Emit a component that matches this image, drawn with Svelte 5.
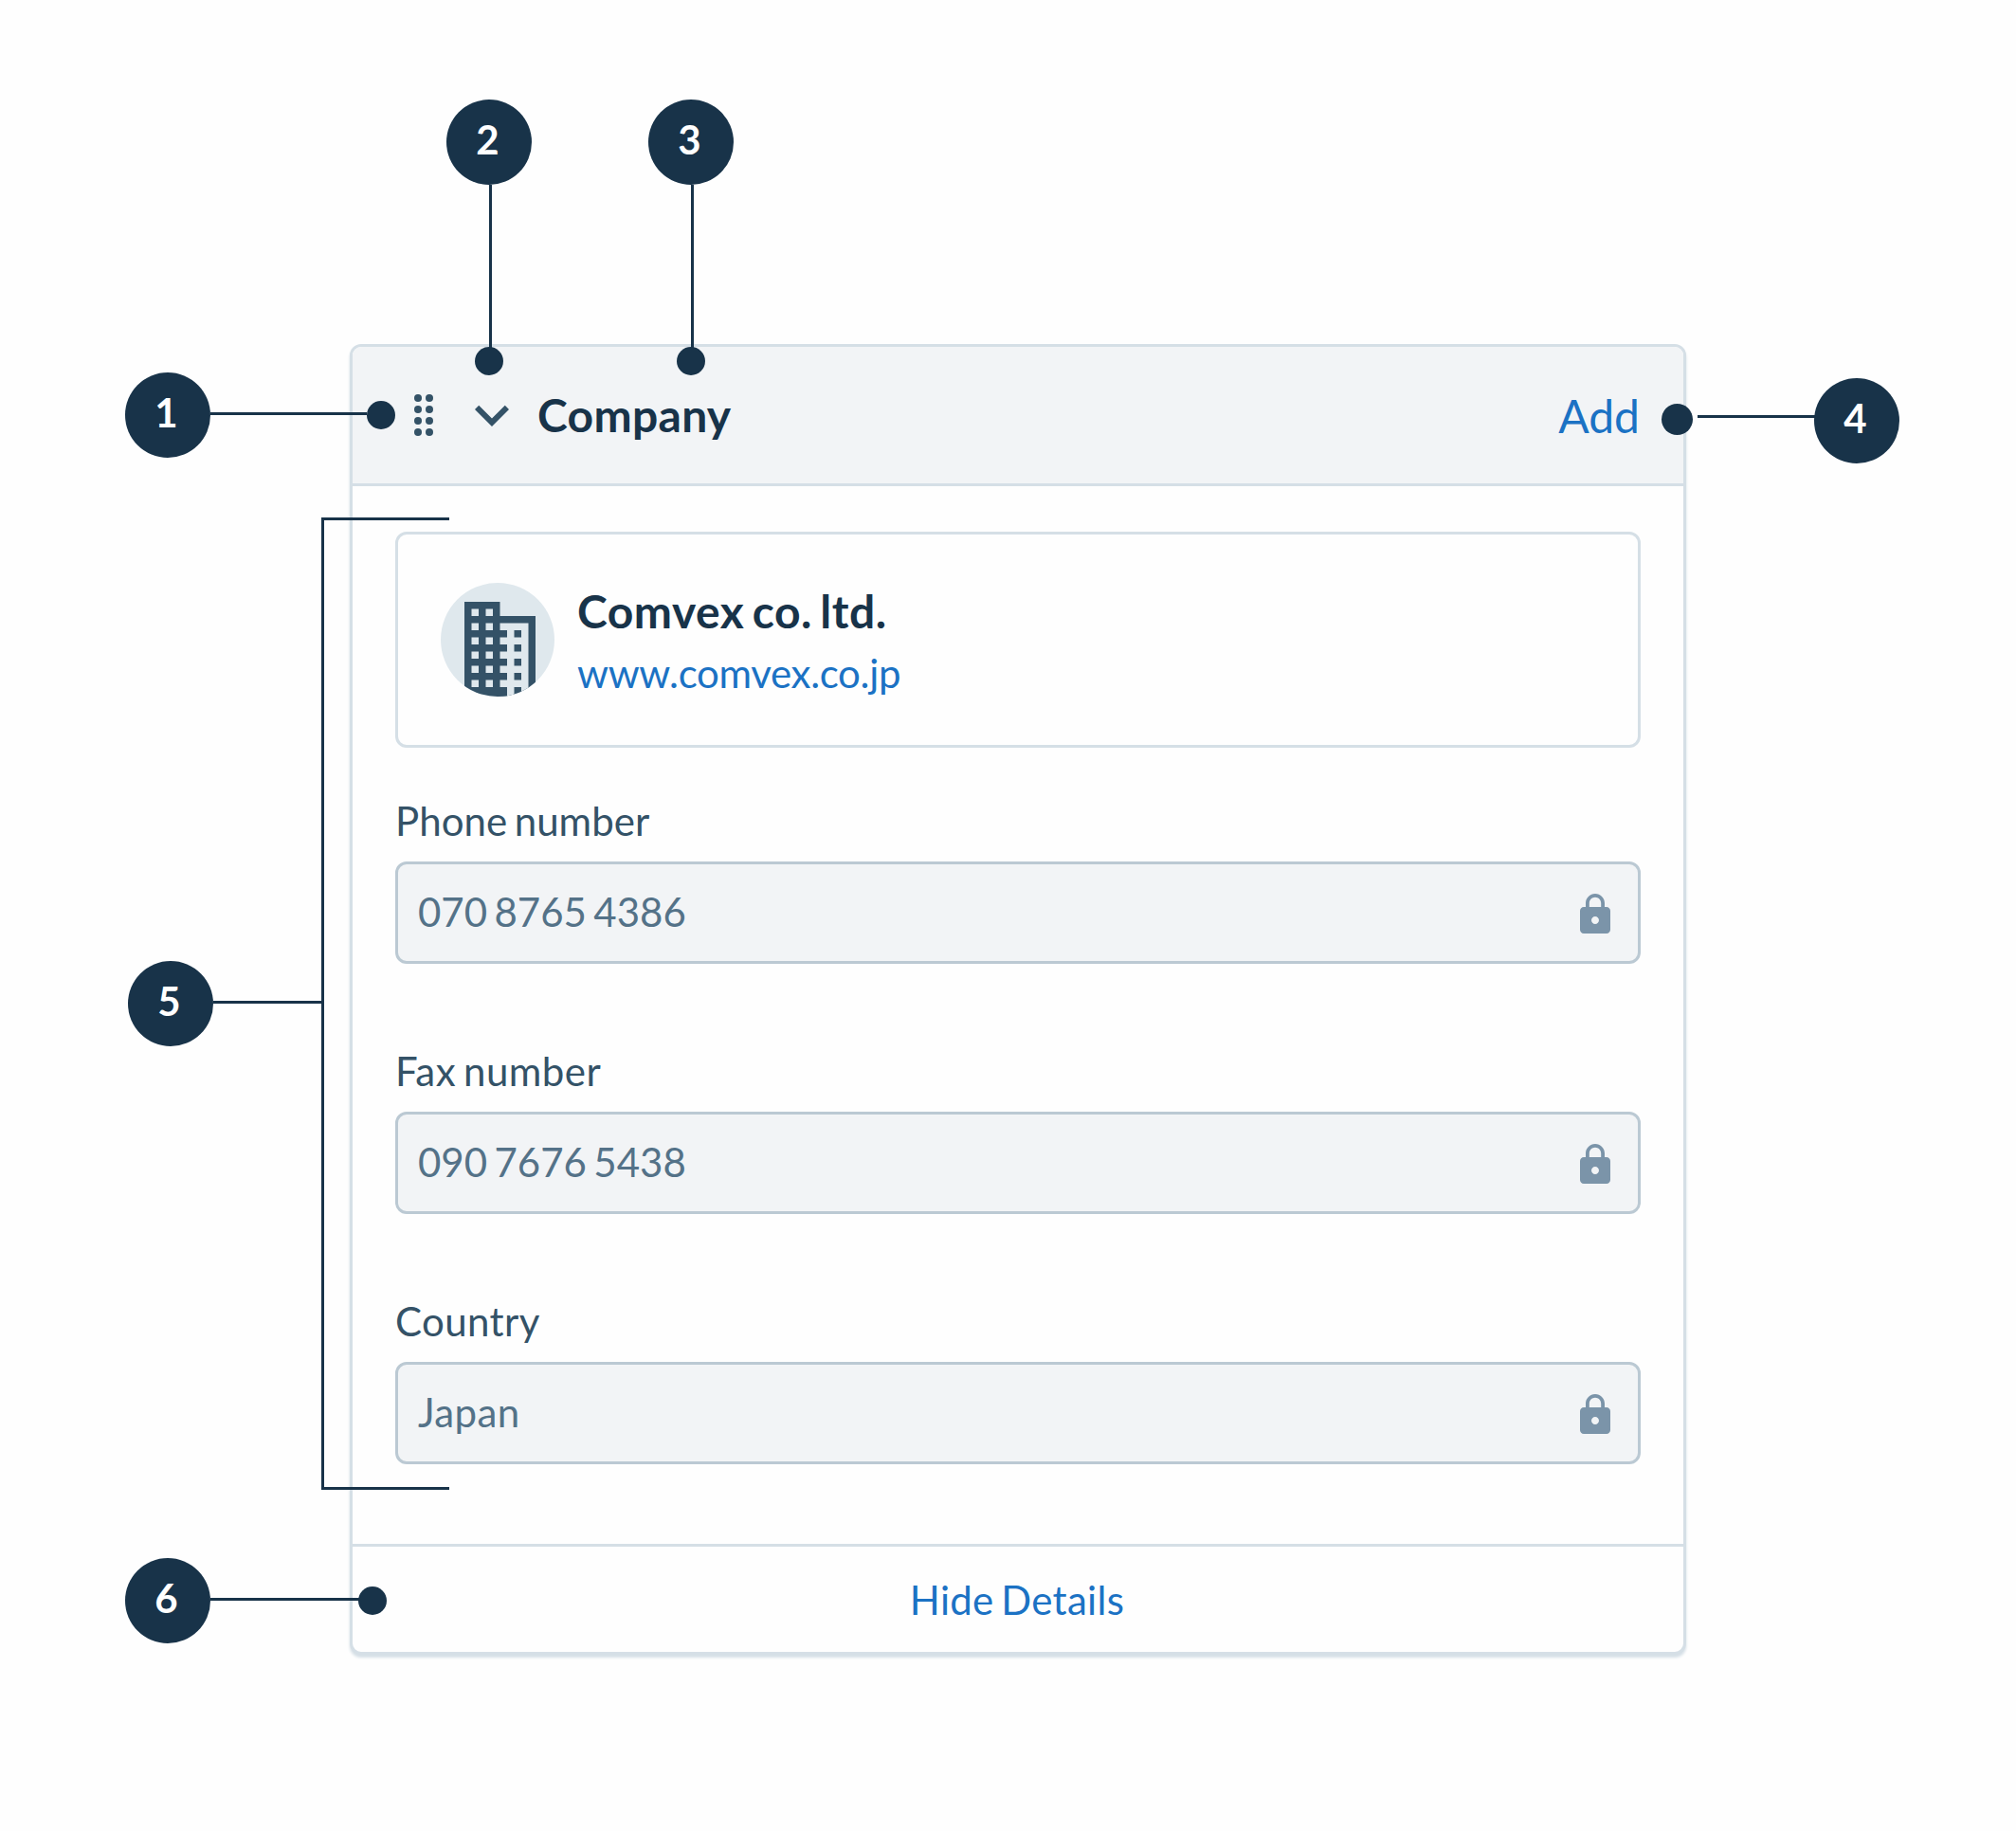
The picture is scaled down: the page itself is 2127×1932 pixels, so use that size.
<script>
  const fields = [
    { label: 'Phone number', tracking: 0.05, value: '070 8765 4386', valueTracking: 0 },
    { label: 'Fax number', tracking: 0.5, value: '090 7676 5438', valueTracking: 0 },
    { label: 'Country', tracking: 0.38, value: 'Japan', valueTracking: 0.4 }
  ];

  const handleDots = [0, 1, 2, 3].flatMap((row) => [
    { x: 4, y: 4 + row * 12 },
    { x: 16, y: 4 + row * 12 }
  ]);

  const towerWindows = [0, 1, 2, 3, 4, 5].flatMap((row) => [
    { x: 32.5, y: 27.5 + row * 15 },
    { x: 47.5, y: 27.5 + row * 15 }
  ]);
  const annexRows = [50, 65, 80, 95, 110];

  // Callouts sit on a free canvas over the card: badge, leader line and end dot.
  const callouts = [
    { n: 1, x: 132, y: 393, line: [222, 435, 165, 3], dot: [387, 423, 30] },
    { n: 2, x: 471, y: 105, line: [516, 195, 3, 172], dot: [501, 366, 30] },
    { n: 3, x: 684, y: 105, line: [729, 195, 3, 172], dot: [714, 366, 30] },
    { n: 4, x: 1914, y: 399, line: [1791, 438, 124, 3], dot: [1752.5, 426, 33] },
    { n: 5, x: 135, y: 1014, line: [225, 1056, 115, 3], dot: null },
    { n: 6, x: 132, y: 1644, line: [222, 1686, 157, 3], dot: [378, 1674, 30] }
  ];
</script>

<main class="page">
  <section class="card">
    <header class="header">
      <svg class="handle" viewBox="0 0 20 44">
        {#each handleDots as d}
          <circle cx={d.x} cy={d.y} r="4" />
        {/each}
      </svg>
      <svg class="chevron" viewBox="0 0 24 24">
        <path d="M16.59 8.59 12 13.17 7.41 8.59 6 10l6 6 6-6z" />
      </svg>
      <h1 class="title">Company</h1>
      <span class="add">Add</span>
    </header>

    <div class="content">
      <article class="company">
        <svg class="avatar" viewBox="0 0 120 120">
          <defs>
            <clipPath id="avatar-clip"><circle cx="60" cy="60" r="60" /></clipPath>
          </defs>
          <g clip-path="url(#avatar-clip)">
            <rect class="pale" width="120" height="120" />
            <path class="ink" d="M25 20H62.5V35H100V120H25Z" />
            <rect class="pale" x="62.5" y="42.5" width="30" height="78" />
            {#each towerWindows as w}
              <rect class="pale" x={w.x} y={w.y} width="7.5" height="7.5" />
            {/each}
            {#each annexRows as y}
              <rect class="ink" x="62" {y} width="8" height={y === 110 ? 10 : 7.5} />
              <rect class="ink" x="77.5" {y} width="7.5" height="7.5" />
            {/each}
          </g>
        </svg>
        <div class="identity">
          <h2 class="name">Comvex co. ltd.</h2>
          <span class="site">www.comvex.co.jp</span>
        </div>
      </article>

      <div class="fields">
        {#each fields as f}
          <div class="field">
            <span class="label" style="letter-spacing:{f.tracking}px">{f.label}</span>
            <div class="input">
              <span class="value" style="letter-spacing:{f.valueTracking}px">{f.value}</span>
              <svg class="lock" viewBox="0 0 24 24">
                <path
                  d="M18 8h-1V6c0-2.76-2.24-5-5-5S7 3.240 7 6v2H6c-1.100 0-2 .9-2 2v10c0 1.100.9 2 2 2h12c1.100 0 2-.9 2-2V10c0-1.100-.9-2-2-2zm-6 9c-1.100 0-2-.9-2-2s.9-2 2-2 2 .9 2 2-.9 2-2 2zm3.100-9H8.900V6c0-1.710 1.390-3.100 3.100-3.100s3.100 1.390 3.100 3.100v2z"
                />
              </svg>
            </div>
          </div>
        {/each}
      </div>
    </div>

    <footer class="footer">Hide Details</footer>
  </section>

  <div class="bracket"></div>
  {#each callouts as c}
    <div
      class="line"
      style="left:{c.line[0]}px;top:{c.line[1]}px;width:{c.line[2]}px;height:{c.line[3]}px"
    ></div>
    {#if c.dot}
      <div class="dot" style="left:{c.dot[0]}px;top:{c.dot[1]}px;width:{c.dot[2]}px;height:{c.dot[2]}px"></div>
    {/if}
    <div class="badge" style="left:{c.x}px;top:{c.y}px">{c.n}</div>
  {/each}
</main>

<style>
  :global(body) {
    background: #fefefe;
  }

  .page {
    position: relative;
    box-sizing: border-box;
    width: 2127px;
    height: 1932px;
    padding: 363px 348px 186px 369px;
    overflow: hidden;
    font-family: Lato, sans-serif;
    font-size: 42px;
    line-height: 63px;
    word-spacing: -0.08em;
    color: #183349;
  }

  .card {
    display: flex;
    flex-direction: column;
    box-sizing: border-box;
    height: 1383px;
    border: 3px solid #d5dfe6;
    border-radius: 12px;
    background: #fefefe;
    box-shadow: 0 3px 3px #d5dfe6;
  }

  .header {
    display: flex;
    align-items: center;
    flex: none;
    height: 144px;
    padding: 0 46px 0 65px;
    border-bottom: 3px solid #d5dfe6;
    border-radius: 9px 9px 0 0;
    background: #f2f4f6;
  }

  .handle {
    width: 20px;
    height: 44px;
    margin-right: 26px;
    fill: #345267;
  }

  .chevron {
    width: 72px;
    height: 72px;
    margin-right: 12px;
    fill: #345267;
  }

  .title,
  .name {
    margin: 0;
    font-size: 48px;
    font-weight: 700;
    line-height: 68px;
  }

  .title {
    letter-spacing: 0.3px;
  }

  .name {
    letter-spacing: 0.5px;
    word-spacing: -0.08em;
  }

  .add {
    margin-left: auto;
    font-size: 48px;
    color: #1b72c4;
  }

  .content {
    flex: 1;
    padding: 48px 45px 0;
  }

  .company {
    display: flex;
    align-items: center;
    box-sizing: border-box;
    height: 228px;
    padding: 0 45px;
    border: 3px solid #d5dfe6;
    border-radius: 12px;
  }

  .avatar {
    width: 120px;
    height: 120px;
    margin-right: 24px;
  }

  .pale {
    fill: #dfe8ed;
  }

  .ink {
    fill: #345267;
  }

  .identity {
    display: flex;
    flex-direction: column;
    padding-top: 3px;
  }

  .site {
    letter-spacing: -0.33px;
    color: #1b72c4;
  }

  .fields {
    display: flex;
    flex-direction: column;
    gap: 82px;
    margin-top: 46px;
  }

  .field {
    display: flex;
    flex-direction: column;
    gap: 11px;
  }

  .label {
    color: #345267;
  }

  .input {
    display: flex;
    align-items: center;
    justify-content: space-between;
    box-sizing: border-box;
    height: 108px;
    padding: 0 21px;
    border: 3px solid #bbc9d3;
    border-radius: 12px;
    background: #f2f4f6;
  }

  .value {
    padding-bottom: 1px;
    color: #547288;
  }

  .lock {
    width: 48px;
    height: 48px;
    margin-top: 4px;
    fill: #7b94a9;
  }

  .footer {
    display: flex;
    align-items: center;
    justify-content: center;
    box-sizing: border-box;
    flex: none;
    height: 114px;
    padding: 2px 2px 0 0;
    border-top: 3px solid #d5dfe6;
    letter-spacing: 0.3px;
    color: #1b72c4;
  }

  .bracket {
    position: absolute;
    left: 339px;
    top: 546px;
    box-sizing: border-box;
    width: 135px;
    height: 1026px;
    border: solid #183349;
    border-width: 3px 0 3px 3px;
  }

  .line,
  .dot,
  .badge {
    position: absolute;
    background: #183349;
  }

  .dot,
  .badge {
    border-radius: 50%;
  }

  .badge {
    display: flex;
    align-items: center;
    justify-content: center;
    box-sizing: border-box;
    width: 90px;
    height: 90px;
    padding: 0 3px 6px 0;
    font-weight: 700;
    color: #fff;
  }
</style>
